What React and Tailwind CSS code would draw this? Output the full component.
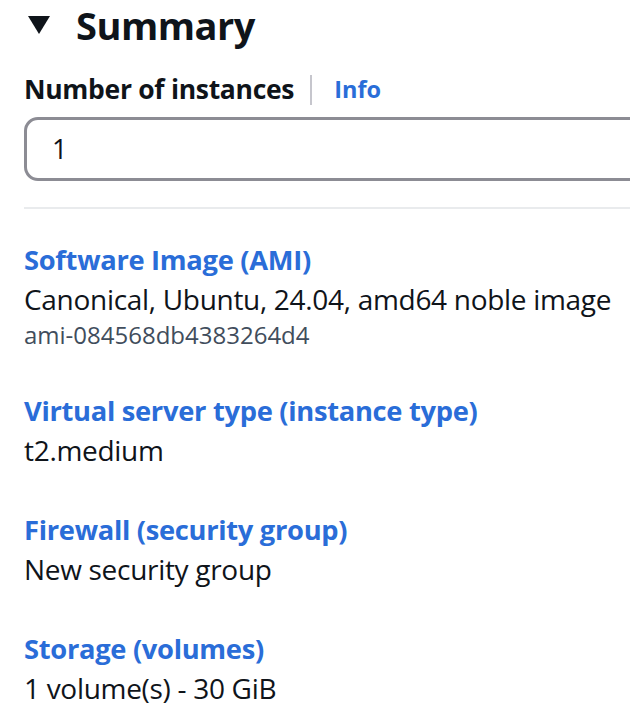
import React from 'react';

const font = { fontFamily: '"Open Sans", "Noto Sans", sans-serif' };

const Section = ({ label, value, sub }) => (
    <div className="mt-[40px] first:mt-0">
        <div className="text-[27.3px] leading-[40px] font-bold text-[#2a6dd8] tracking-[-0.3px]">{label}</div>
        <div className="text-[28px] leading-[39px] text-[#0f141a] tracking-[-0.3px]">{value}</div>
        {sub && <div className="text-[24px] leading-[32px] text-[#414d5c]">{sub}</div>}
    </div>
);

export default function App() {
    return (
        <div className="w-[630px] h-[716px] overflow-hidden bg-white pl-[24px]" style={font}>
            {/* 标题 */}
            <div className="flex items-center h-[50px]">
                <svg width="22" height="18" viewBox="0 0 22 18" className="ml-[4px] shrink-0">
                    <polygon points="0,0 22,0 11,18" fill="#0f141a" />
                </svg>
                <h2 className="ml-[26px] text-[38px] font-bold text-[#0f141a] leading-[50px] tracking-[-0.5px]">Summary</h2>
            </div>

            {/* 实例数量 */}
            <div className="flex items-center mt-[23px] h-[34px]">
                <span className="text-[26.5px] font-bold text-[#0f141a] tracking-[-0.3px]">Number of instances</span>
                <span className="ml-[16px] mr-[22px] w-[2px] h-[30px] bg-[#c6c6cd]"></span>
                <span className="text-[23.5px] font-bold text-[#2a6dd8]">Info</span>
            </div>
            <div className="mt-[10px] -mr-[20px] h-[64px] border-[3px] border-[#8c8c94] rounded-[14px] flex items-center pl-[25px]">
                <span className="text-[27px] text-[#0f141a]">1</span>
            </div>

            <div className="mt-[26px] h-[2px] bg-[#e9ebed]"></div>

            <div className="mt-[31px]">
                <Section label="Software Image (AMI)" value="Canonical, Ubuntu, 24.04, amd64 noble image" sub="ami-084568db4383264d4" />
                <Section label="Virtual server type (instance type)" value="t2.medium" />
                <Section label="Firewall (security group)" value="New security group" />
                <Section label="Storage (volumes)" value="1 volume(s) - 30 GiB" />
            </div>
        </div>
    );
}
